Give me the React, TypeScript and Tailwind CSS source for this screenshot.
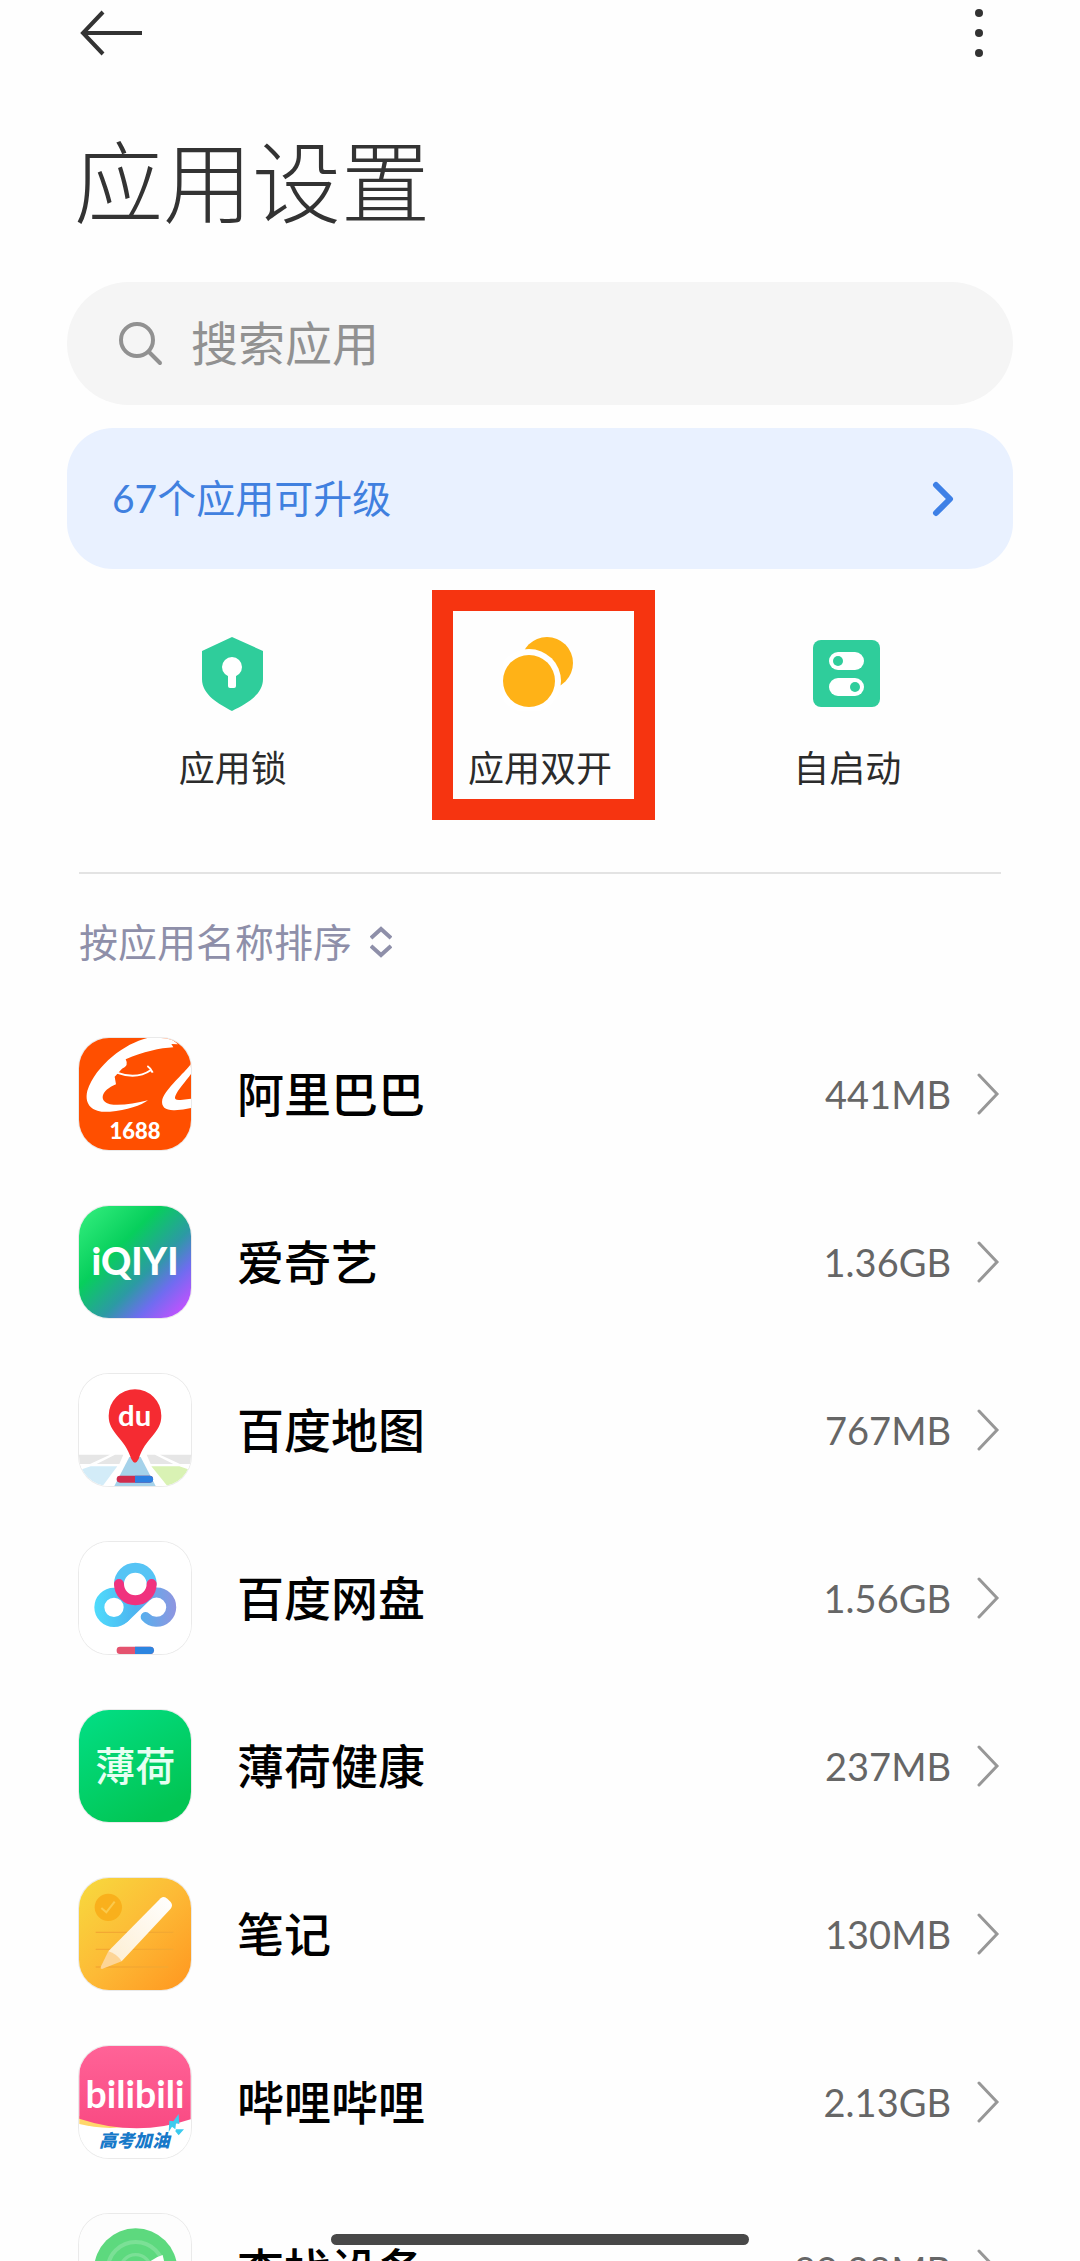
import type { ReactNode } from "react";

function AlibabaIcon() {
    return (
        <svg viewBox="57 54 336 336" className="h-full w-full" aria-hidden="true">
            <rect x="57" y="54" width="336" height="336" fill="#ff4f00" />
            <path
                d="M262 54C195 70 108 135 82 212C70 262 108 279 150 275C200 271 245 256 264 241C225 250 182 258 150 253C116 244 122 212 168 193L164 170L186 146Q208 138 197 118C250 95 300 84 340 82L334 72L354 73L330 54Z"
                fill="#fff"
            />
            <path d="M170 158Q230 180 273 150M262 138Q272 144 278 158" fill="none" stroke="#fff" strokeWidth="6" />
            <path d="M393 132C372 160 318 205 307 238C302 262 318 272 344 271Q370 269 393 264V236L362 240Q340 242 346 228C354 208 376 186 393 162Z" fill="#fff" />
            <text x="225" y="356" textAnchor="middle" fontSize="66" fontWeight="900" fill="#fff">1688</text>
        </svg>
    );
}

function IqiyiIcon() {
    return (
        <svg viewBox="57 559 336 336" className="h-full w-full" aria-hidden="true">
            <defs>
                <linearGradient id="iqiyi" x1="0" y1="0" x2="1" y2="1">
                    <stop offset="0" stopColor="#36f080" />
                    <stop offset="0.36" stopColor="#07cf5c" />
                    <stop offset="0.6" stopColor="#2c9aa4" />
                    <stop offset="0.76" stopColor="#6f6cf0" />
                    <stop offset="0.95" stopColor="#c94fff" />
                </linearGradient>
            </defs>
            <rect x="57" y="559" width="336" height="336" fill="url(#iqiyi)" />
            <text x="225" y="766" textAnchor="middle" fontSize="112" fontWeight="900" fill="#fff">iQIYI</text>
        </svg>
    );
}

function BaiduMapIcon() {
    return (
        <svg viewBox="57 73 336 336" className="h-full w-full" aria-hidden="true">
            <rect x="57" y="73" width="336" height="336" fill="#fff" />
            <path d="M57 315H150L90 343H57ZM393 315H300L360 343H393Z" fill="#e6e6e6" />
            <path d="M165 315H190L178 343H110ZM285 315H260L272 343H340Z" fill="#e6e6e6" />
            <path d="M57 362L92 350H172L128 409H57Z" fill="#d3ecf8" />
            <path d="M393 362L358 350H274L322 409H393Z" fill="#d9f2b4" />
            <path d="M208 322H242L287 409H163Z" fill="#a5d2ea" />
            <path d="M146 198A79 79 0 0 1 304 198C304 252 256 262 236 328Q225 350 214 328C194 262 146 252 146 198Z" fill="#f52b32" />
            <text x="224" y="230" textAnchor="middle" fontSize="88" fontWeight="700" fill="#fff">du</text>
            <rect x="170" y="378" width="109" height="21" rx="10" fill="#cf2c4d" />
            <path d="M225 378H269a10 10 0 0 1 0 21H225Z" fill="#2d80e0" />
        </svg>
    );
}

function BaiduDiskIcon() {
    return (
        <svg viewBox="57 577 336 336" className="h-full w-full" aria-hidden="true">
            <defs>
                <linearGradient id="disk" gradientUnits="userSpaceOnUse" x1="102" y1="0" x2="348" y2="0">
                    <stop offset="0" stopColor="#4fdcfc" />
                    <stop offset="0.5" stopColor="#4db4f0" />
                    <stop offset="1" stopColor="#8f95e0" />
                </linearGradient>
            </defs>
            <rect x="57" y="577" width="336" height="336" fill="#fff" />
            <g fill="none" strokeWidth="30" strokeLinecap="round">
                <circle cx="162" cy="773" r="44" stroke="url(#disk)" />
                <path d="M257 802A44 44 0 1 0 258 742L193 805" stroke="url(#disk)" />
                <path d="M177 703A49 49 0 0 1 275 703" stroke="#56c4f5" />
                <path d="M177 703A49 49 0 0 0 275 703" stroke="#f0327e" />
            </g>
            <rect x="170" y="891" width="111" height="22" rx="10" fill="#e4536f" />
            <path d="M225 891H271a10 10 0 0 1 0 22H225Z" fill="#2d85e0" />
        </svg>
    );
}

function BooheeIcon() {
    return (
        <svg viewBox="57 60 336 336" className="h-full w-full" aria-hidden="true">
            <defs>
                <linearGradient id="boohee" x1="0" y1="0" x2="0.6" y2="1">
                    <stop offset="0" stopColor="#02df86" />
                    <stop offset="1" stopColor="#02c553" />
                </linearGradient>
            </defs>
            <rect x="57" y="60" width="336" height="336" fill="url(#boohee)" />
            <text x="226" y="274" textAnchor="middle" fontSize="120" fontWeight="500" fill="#e6fff2">薄荷</text>
        </svg>
    );
}

function NotesIcon() {
    return (
        <svg viewBox="57 565 336 336" className="h-full w-full" aria-hidden="true">
            <defs>
                <linearGradient id="notes" x1="0" y1="0" x2="1" y2="1">
                    <stop offset="0" stopColor="#f7da3e" />
                    <stop offset="0.5" stopColor="#fdba36" />
                    <stop offset="1" stopColor="#ff961f" />
                </linearGradient>
                <linearGradient id="pencil" x1="1" y1="0" x2="0" y2="1">
                    <stop offset="0" stopColor="#fff" />
                    <stop offset="1" stopColor="#fdeed2" />
                </linearGradient>
            </defs>
            <rect x="57" y="565" width="336" height="336" fill="url(#notes)" />
            <circle cx="145" cy="653" r="41" fill="#f9b01c" />
            <path d="M124 655L139 668L164 636" fill="none" stroke="#fbca4c" strokeWidth="6" />
            <path d="M107 728H340M107 779H340M107 832H325" stroke="#f3a832" strokeWidth="4" />
            <path d="M302 626Q312 618 322 627L332 637Q340 647 332 657L185 815L145 785Z" fill="url(#pencil)" />
            <path d="M145 785Q170 792 185 815L126 838Q121 838 122 832Z" fill="#fdd596" />
        </svg>
    );
}

function BilibiliIcon() {
    return (
        <svg viewBox="28 30 334 336" className="h-full w-full" aria-hidden="true">
            <defs>
                <linearGradient id="bili" x1="0" y1="0" x2="0" y2="1">
                    <stop offset="0" stopColor="#ff6397" />
                    <stop offset="1" stopColor="#f94a83" />
                </linearGradient>
            </defs>
            <rect x="28" y="30" width="334" height="336" fill="#fff" />
            <path d="M28 240L180 272L120 276Q70 274 28 264Z" fill="#ffd76b" />
            <path d="M28 30H362V250Q200 305 28 248Z" fill="url(#bili)" />
            <text x="195" y="217" textAnchor="middle" fontSize="112" fontWeight="700" fill="#fff">bilibili</text>
            <path d="M326 234L328 264L318 262L316 280L306 272L296 288L298 254L310 256ZM318 280L342 280L326 298L316 286Z" fill="#3ccbee" />
            <text x="193" y="332" textAnchor="middle" fontSize="53" fontWeight="900" fontStyle="italic" fill="#1779c9">高考加油</text>
        </svg>
    );
}

function FindDeviceIcon() {
    return (
        <svg viewBox="28 535 334 336" className="h-full w-full" aria-hidden="true">
            <rect x="28" y="535" width="334" height="336" fill="#fdfdfd" />
            <circle cx="197" cy="703" r="125" fill="#5dd97e" />
            <circle cx="197" cy="703" r="84" fill="none" stroke="#7be096" strokeWidth="12" />
            <circle cx="197" cy="703" r="46" fill="none" stroke="#7be096" strokeWidth="10" />
            <path d="M197 703L262 664L278 658L282 676Z" fill="#fff" />
        </svg>
    );
}

function LockIcon() {
    return (
        <svg width="74" height="74" viewBox="0 0 74 74" aria-hidden="true">
            <path d="M36 0L67 14V42C67 58 50 67 36 74C23 67 6 58 6 42V14Z" fill="#2fcd9b" />
            <circle cx="36" cy="30" r="10" fill="#fff" />
            <rect x="32" y="34" width="8" height="17" rx="2" fill="#fff" />
        </svg>
    );
}

function DualAppsIcon() {
    return (
        <svg width="74" height="74" viewBox="0 0 74 74" aria-hidden="true">
            <circle cx="44" cy="26" r="26" fill="#ffb217" />
            <circle cx="26" cy="44" r="32" fill="#fff" />
            <circle cx="26" cy="44" r="26" fill="#ffb217" />
        </svg>
    );
}

function AutostartIcon() {
    return (
        <svg width="74" height="74" viewBox="0 0 74 74" aria-hidden="true">
            <rect x="3" y="3" width="67" height="67" rx="8" fill="#2fcd9b" />
            <rect x="19" y="15" width="35" height="18" rx="9" fill="#fff" />
            <rect x="19" y="41" width="35" height="18" rx="9" fill="#fff" />
            <circle cx="28" cy="24" r="5" fill="#2fcd9b" />
            <circle cx="45" cy="50" r="5" fill="#2fcd9b" />
        </svg>
    );
}

type AppItem = {
    name: string;
    size: string;
    icon: ReactNode;
};

const apps: AppItem[] = [
    { name: "阿里巴巴", size: "441MB", icon: <AlibabaIcon /> },
    { name: "爱奇艺", size: "1.36GB", icon: <IqiyiIcon /> },
    { name: "百度地图", size: "767MB", icon: <BaiduMapIcon /> },
    { name: "百度网盘", size: "1.56GB", icon: <BaiduDiskIcon /> },
    { name: "薄荷健康", size: "237MB", icon: <BooheeIcon /> },
    { name: "笔记", size: "130MB", icon: <NotesIcon /> },
    { name: "哔哩哔哩", size: "2.13GB", icon: <BilibiliIcon /> },
    { name: "查找设备", size: "89.28MB", icon: <FindDeviceIcon /> },
];

const shortcuts = [
    { label: "应用锁", icon: <LockIcon />, highlighted: false },
    { label: "应用双开", icon: <DualAppsIcon />, highlighted: true },
    { label: "自启动", icon: <AutostartIcon />, highlighted: false },
];

function AppRow({ name, size, icon }: AppItem) {
    return (
        <li>
            <a href="#" className="flex h-[168px] items-center">
                <span className="h-28 w-28 shrink-0 overflow-hidden rounded-[30px] ring-1 ring-black/8">{icon}</span>
                <span className="ml-[46px] flex-1 text-[47px] leading-none font-medium text-black">{name}</span>
                <span className="text-[38px] leading-none text-[#666666]">{size}</span>
                <svg width="24" height="42" viewBox="0 0 24 42" className="ml-[26px]" fill="none" stroke="#979797" strokeWidth="3" strokeLinecap="round" aria-hidden="true">
                    <path d="M2 2L20 21L2 40" />
                </svg>
            </a>
        </li>
    );
}

export default function App() {
    return (
        <div className="flex h-screen flex-col overflow-hidden bg-[#fefefe] font-['Lato','Noto_Sans_CJK_SC',sans-serif]">
            <header className="flex h-[66px] shrink-0 items-center justify-between px-20">
                <button type="button" aria-label="返回">
                    <svg width="64" height="46" viewBox="0 0 64 46" fill="none" stroke="#333" strokeWidth="4" aria-hidden="true">
                        <path d="M23 2L3 23L23 44M3 23H62" />
                    </svg>
                </button>
                <button type="button" aria-label="更多" className="pr-4">
                    <svg width="10" height="50" viewBox="0 0 10 50" fill="#333" aria-hidden="true">
                        <circle cx="5" cy="5" r="4" />
                        <circle cx="5" cy="25" r="4" />
                        <circle cx="5" cy="45" r="4" />
                    </svg>
                </button>
            </header>

            <h1 className="mt-[71px] shrink-0 px-[74px] text-[89px] leading-[90px] font-light text-[#333]">应用设置</h1>

            <label className="mx-[67px] mt-[55px] flex h-[123px] shrink-0 items-center gap-7 rounded-full bg-[#f5f5f5] px-[52px]">
                <svg width="44" height="44" viewBox="0 0 44 44" fill="none" stroke="#919191" strokeWidth="4" strokeLinecap="round" aria-hidden="true">
                    <circle cx="18" cy="18" r="16" />
                    <path d="M30 30L41 41" />
                </svg>
                <input type="text" aria-label="搜索应用" placeholder="搜索应用" className="h-16 min-w-0 flex-1 bg-transparent text-[47px] outline-none placeholder:text-[#919191]" />
            </label>

            <a href="#" className="mx-[67px] mt-[23px] flex h-[141px] shrink-0 items-center justify-between rounded-[46px] bg-[#e9f1ff] px-[45px] text-[#4080df]">
                <span className="text-[39px] leading-none">67个应用可升级</span>
                <svg width="36" height="36" viewBox="0 0 36 36" fill="none" stroke="#3e80e6" strokeWidth="6" strokeLinecap="round" strokeLinejoin="round" aria-hidden="true">
                    <path d="M4 4L18 18L4 32" />
                </svg>
            </a>

            <nav className="mx-[79px] grid h-[305px] shrink-0 grid-cols-3 border-b-2 border-[#e3e3e3]">
                {shortcuts.map(({ label, icon, highlighted }) => (
                    <button key={label} type="button" className="relative flex flex-col items-center gap-[39px] pt-[68px]">
                        {icon}
                        <span className="text-[36px] leading-none text-[#2b2b2b]">{label}</span>
                        {highlighted ? (
                            <span className="absolute top-[21px] left-1/2 h-[230px] w-[223px] -translate-x-[108px] border-[21px] border-[#f63410]" />
                        ) : null}
                    </button>
                ))}
            </nav>

            <div className="mx-[79px] flex h-[136px] shrink-0 items-center">
                <button type="button" className="flex items-center gap-[18px] text-[#8e8fa9]">
                    <span className="text-[39px] leading-none">按应用名称排序</span>
                    <svg width="22" height="32" viewBox="0 0 22 32" fill="none" stroke="#8e8fa9" strokeWidth="4" aria-hidden="true">
                        <path d="M1 12L11 3L21 12M1 20L11 29L21 20" />
                    </svg>
                </button>
            </div>

            <ul className="min-h-0 flex-1 overflow-hidden px-[79px]">
                {apps.map((app) => (
                    <AppRow key={app.name} {...app} />
                ))}
            </ul>

            <div className="fixed bottom-4 left-1/2 h-[11px] w-[418px] -translate-x-1/2 rounded-full bg-[#484848]" />
        </div>
    );
}
